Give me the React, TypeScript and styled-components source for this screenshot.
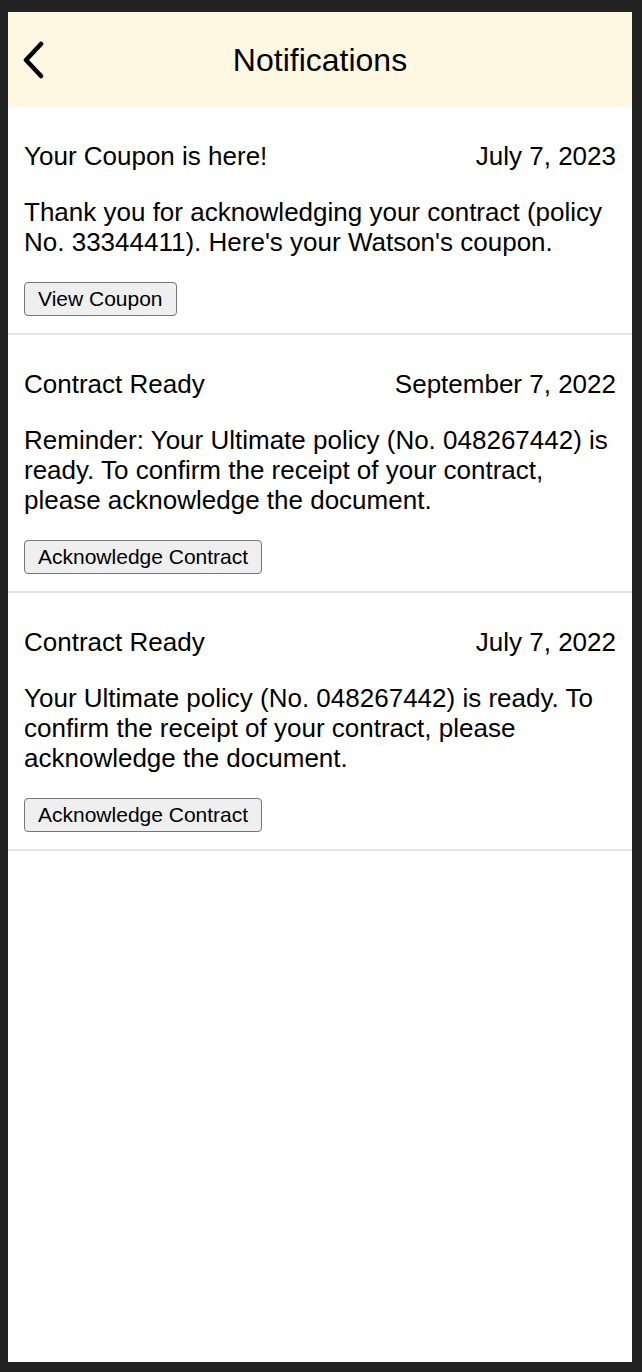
import React from 'react';
import styled, { createGlobalStyle } from 'styled-components';

type Notice = {
  id: number;
  title: string;
  date: string;
  body: string;
  action: string;
};

const notices: Notice[] = [
  {
    id: 1,
    title: 'Your Coupon is here!',
    date: 'July 7, 2023',
    body: "Thank you for acknowledging your contract (policy No. 33344411). Here's your Watson's coupon.",
    action: 'View Coupon',
  },
  {
    id: 2,
    title: 'Contract Ready',
    date: 'September 7, 2022',
    body: 'Reminder: Your Ultimate policy (No. 048267442) is ready. To confirm the receipt of your contract, please acknowledge the document.',
    action: 'Acknowledge Contract',
  },
  {
    id: 3,
    title: 'Contract Ready',
    date: 'July 7, 2022',
    body: 'Your Ultimate policy (No. 048267442) is ready. To confirm the receipt of your contract, please acknowledge the document.',
    action: 'Acknowledge Contract',
  },
];

const App: React.FC = () => {
  return (
    <>
      <GlobalStyle />
      <Frame>
        <Screen>
          <Header>
            <BackButton aria-label="Back">
              <svg width="24" height="38" viewBox="0 0 24 38" fill="none">
                <path
                  d="M19 3 L4 19 L19 35"
                  stroke="#000"
                  strokeWidth="4.5"
                  strokeLinecap="round"
                  strokeLinejoin="round"
                />
              </svg>
            </BackButton>
            <Title>Notifications</Title>
          </Header>
          <List>
            {notices.map((n) => (
              <Item key={n.id}>
                <ItemTop>
                  <span>{n.title}</span>
                  <span>{n.date}</span>
                </ItemTop>
                <Body>{n.body}</Body>
                <ActionButton>{n.action}</ActionButton>
              </Item>
            ))}
          </List>
        </Screen>
      </Frame>
    </>
  );
};

// Styled components
const GlobalStyle = createGlobalStyle`
  html, body {
    margin: 0;
    padding: 0;
    background: #222223;
  }
  * {
    box-sizing: border-box;
  }
`;

const Frame = styled.div`
  width: 642px;
  height: 1372px;
  padding: 12px 10px 10px 8px;
  background: #222223;
`;

const Screen = styled.div`
  height: 100%;
  background: #ffffff;
  display: flex;
  flex-direction: column;
  font-family: 'Liberation Sans', Arial, sans-serif;
  color: #000;
`;

const Header = styled.header`
  position: relative;
  height: 95px;
  background-color: #fef7e1;
  display: flex;
  align-items: center;
  justify-content: center;
`;

const BackButton = styled.button`
  position: absolute;
  left: 14px;
  top: 29px;
  padding: 0;
  border: none;
  background: none;
  display: flex;
`;

const Title = styled.h1`
  margin: 0;
  font-size: 32px;
  font-weight: 400;
  line-height: 1;
`;

const List = styled.main`
  display: flex;
  flex-direction: column;
`;

const Item = styled.section`
  padding: 34px 16px 17px;
  border-bottom: 2px solid #e7e4df;
  font-size: 26px;
  line-height: 30px;
`;

const ItemTop = styled.div`
  display: flex;
  justify-content: space-between;
`;

const Body = styled.p`
  margin: 26px 0 25px;
`;

const ActionButton = styled.button`
  height: 34px;
  padding: 0 13px;
  font-family: 'Liberation Sans', Arial, sans-serif;
  font-size: 21px;
  color: #000;
  background-color: #efefef;
  border: 1px solid #767676;
  border-radius: 4px;
  display: block;
`;

export default App;
